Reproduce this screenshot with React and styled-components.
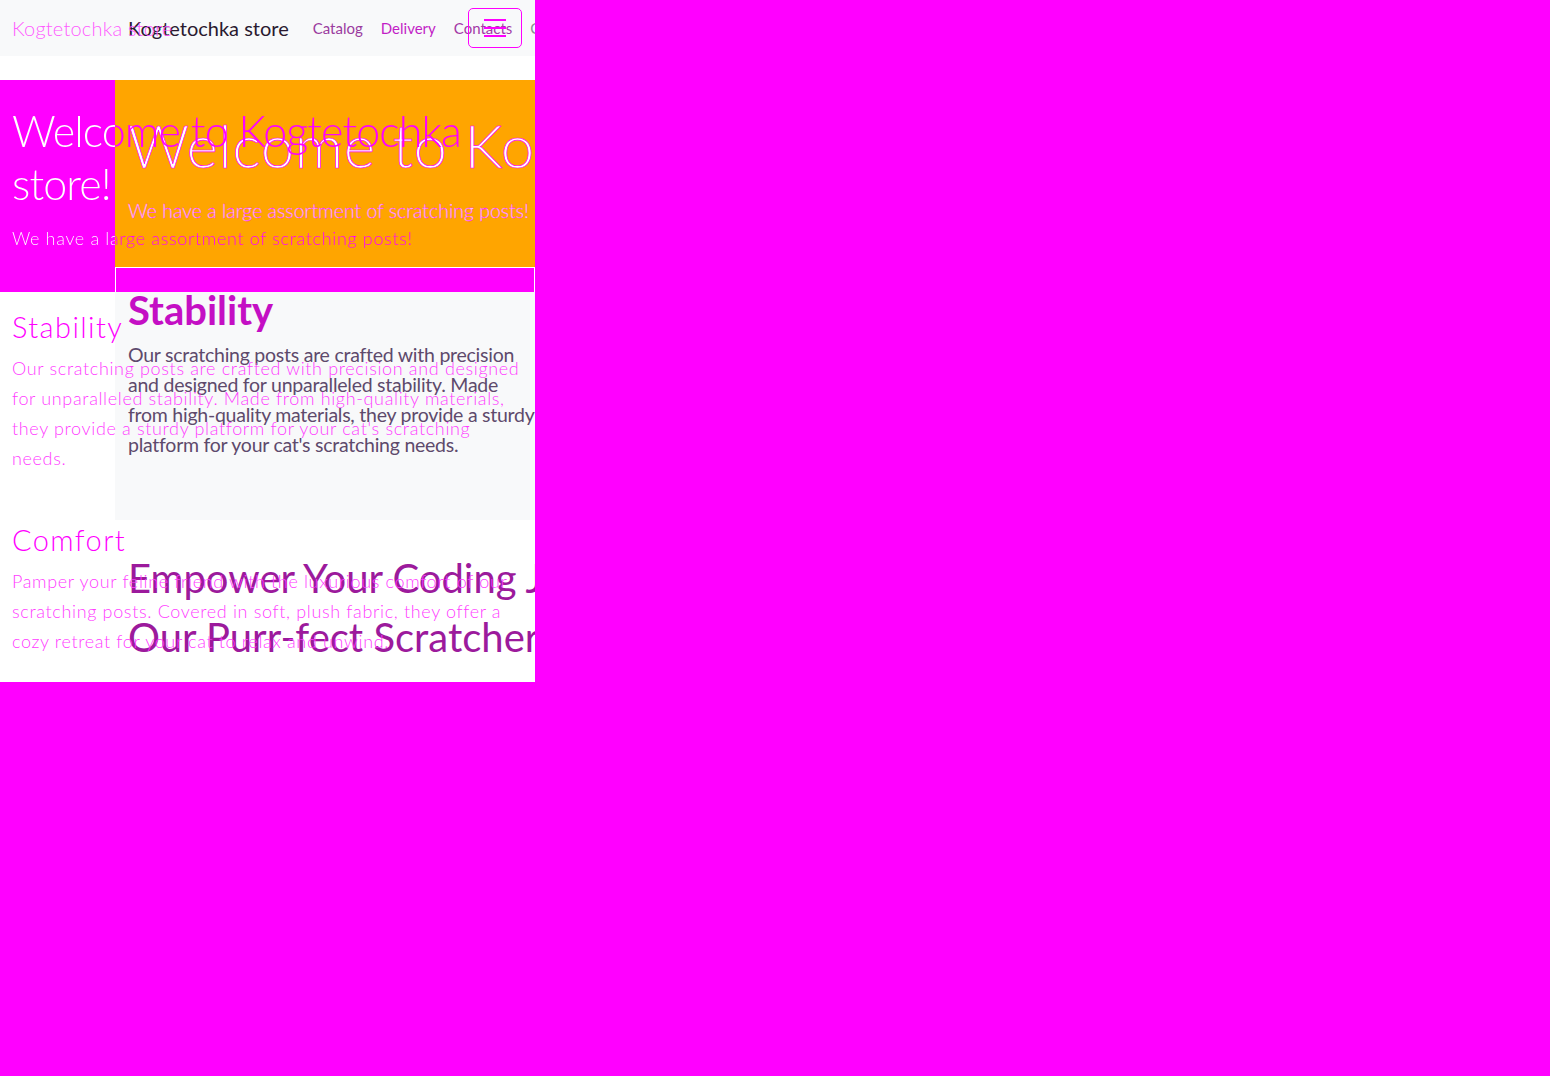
import React from 'react'
import styled, { createGlobalStyle } from 'styled-components'

const MAGENTA = '#ff00ff'

const GlobalStyle = createGlobalStyle`
  body {
    margin: 0;
    background: ${MAGENTA};
    font-family: Lato, "Noto Sans", sans-serif;
  }
`

const Frame = styled.div`
  position: relative;
  width: 535px;
  height: 682px;
  background: #fff;
  overflow: hidden;
`

/* base page */

const Navbar = styled.nav`
  height: 56px;
  display: flex;
  align-items: center;
  padding: 0 12px;
  background: #f8f9fa;
`

const Brand = styled.span`
  position: relative;
  z-index: 2;
  font-size: 20px;
  font-weight: 300;
  color: #ff5cff;
  letter-spacing: 0.2px;
`

const Hero = styled.header`
  box-sizing: border-box;
  height: 212px;
  margin-top: 24px;
  padding: 24px 12px 0;
  background: ${MAGENTA};
`

const HeroTitle = styled.h1`
  position: relative;
  z-index: 2;
  margin: 0;
  font-size: 43px;
  font-weight: 300;
  line-height: 53px;
  letter-spacing: -0.9px;
  background: linear-gradient(90deg, #fff 103px, ${MAGENTA} 103px);
  -webkit-background-clip: text;
  background-clip: text;
  color: transparent;
`

const HeroLead = styled.p`
  position: relative;
  z-index: 2;
  margin: 15px 0 0;
  font-size: 18px;
  font-weight: 300;
  line-height: 27px;
  letter-spacing: 0.65px;
  background: linear-gradient(90deg, #fff 103px, ${MAGENTA} 103px);
  -webkit-background-clip: text;
  background-clip: text;
  color: transparent;
`

const Features = styled.section`
  padding: 18px 12px 0;
`

const FeatureTitle = styled.h2`
  position: relative;
  z-index: 2;
  margin: ${p => (p.$first ? '0' : '50px')} 0 0;
  font-size: 29px;
  font-weight: 300;
  line-height: 34px;
  letter-spacing: 1.4px;
  color: ${MAGENTA};
`

const FeatureText = styled.p`
  position: relative;
  z-index: 2;
  margin: 9px 0 0;
  font-size: 18px;
  font-weight: 300;
  line-height: 30px;
  letter-spacing: 0.65px;
  color: #ff3dff;
  white-space: nowrap;
`

/* shifted copy drawn over the base page */

const Overlay = styled.div`
  position: absolute;
  top: 0;
  left: 115px;
  width: 420px;
  bottom: 0;
  overflow: hidden;
  z-index: 1;
`

const TopRow = styled.div`
  position: relative;
  height: 56px;
  display: flex;
  align-items: center;
  padding-left: 13px;
  gap: 18px;
  white-space: nowrap;
`

const TopBrand = styled.span`
  font-size: 20px;
  color: #2a1a30;
  margin-right: 6px;
`

const TopLink = styled.a`
  font-size: 15px;
  color: ${p => p.$color};
  text-decoration: none;
`

const Toggler = styled.button`
  position: absolute;
  left: 353px;
  top: 8px;
  width: 54px;
  height: 40px;
  padding: 0;
  border: 1px solid ${MAGENTA};
  border-radius: 5px;
  background: transparent;
  display: flex;
  flex-direction: column;
  align-items: center;
  justify-content: center;
  gap: 6px;
`

const TogglerBar = styled.span`
  width: 22px;
  height: 2px;
  background: ${MAGENTA};
`

const Banner = styled.div`
  box-sizing: border-box;
  height: 187px;
  margin-top: 24px;
  padding: 35px 13px 0;
  background: #ffa500;
  white-space: nowrap;
`

const BannerTitle = styled.h1`
  margin: 0;
  font-size: 60px;
  font-weight: 300;
  line-height: 60px;
  letter-spacing: 0.6px;
  color: #fff;
  -webkit-text-stroke: 0.7px ${MAGENTA};
`

const BannerLead = styled.p`
  margin: 24px 0 0;
  font-size: 19.5px;
  font-weight: 300;
  line-height: 24px;
  color: #fff;
  -webkit-text-stroke: 0.3px ${MAGENTA};
`

const Strip = styled.div`
  box-sizing: border-box;
  height: 25px;
  border: 1px solid #fff;
  border-bottom: none;
  background: ${MAGENTA};
`

const Card = styled.div`
  box-sizing: border-box;
  height: 228px;
  padding: 0 13px;
  background: #f8f9fa;
  white-space: nowrap;
`

const CardTitle = styled.h2`
  margin: 0;
  font-size: 40px;
  font-weight: 700;
  line-height: 36px;
  color: #c40fc4;
`

const CardText = styled.p`
  margin: 12px 0 0;
  font-size: 19.5px;
  line-height: 30px;
  letter-spacing: -0.25px;
  color: #5e4a6c;
`

const Closing = styled.div`
  padding: 29px 13px 0;
  white-space: nowrap;
`

const BigLine = styled.h2`
  margin: 0;
  font-size: 40px;
  font-weight: 400;
  line-height: 59px;
  color: #9c1a9c;
`

const App = () => (
  <>
    <GlobalStyle />
    <Frame>
      <Navbar>
        <Brand>Kogtetochka store</Brand>
      </Navbar>
      <Hero>
        <HeroTitle>Welcome to Kogtetochka store!</HeroTitle>
        <HeroLead>We have a large assortment of scratching posts!</HeroLead>
      </Hero>
      <Features>
        <FeatureTitle $first>Stability</FeatureTitle>
        <FeatureText>
          Our scratching posts are crafted with precision and designed<br />
          for unparalleled stability. Made from high-quality materials,<br />
          they provide a sturdy platform for your cat's scratching<br />
          needs.
        </FeatureText>
        <FeatureTitle>Comfort</FeatureTitle>
        <FeatureText>
          Pamper your feline friend with the luxurious comfort of our<br />
          scratching posts. Covered in soft, plush fabric, they offer a<br />
          cozy retreat for your cat to relax and unwind.
        </FeatureText>
      </Features>

      <Overlay>
        <TopRow>
          <TopBrand>Kogtetochka store</TopBrand>
          <TopLink href="#" $color="#9b3c9f">Catalog</TopLink>
          <TopLink href="#" $color="#c21ec6">Delivery</TopLink>
          <TopLink href="#" $color="#a33aa6">Contacts</TopLink>
          <TopLink href="#" $color="#8a8f96">Cart</TopLink>
          <Toggler aria-label="menu">
            <TogglerBar />
            <TogglerBar />
            <TogglerBar />
          </Toggler>
        </TopRow>
        <Banner>
          <BannerTitle>Welcome to Kogtetochka store!</BannerTitle>
          <BannerLead>We have a large assortment of scratching posts!</BannerLead>
        </Banner>
        <Strip />
        <Card>
          <CardTitle>Stability</CardTitle>
          <CardText>
            Our scratching posts are crafted with precision<br />
            and designed for unparalleled stability. Made<br />
            from high-quality materials, they provide a sturdy<br />
            platform for your cat's scratching needs.
          </CardText>
        </Card>
        <Closing>
          <BigLine>Empower Your Coding Journey</BigLine>
          <BigLine>Our Purr-fect Scratchers</BigLine>
        </Closing>
      </Overlay>
    </Frame>
  </>
)

export default App
